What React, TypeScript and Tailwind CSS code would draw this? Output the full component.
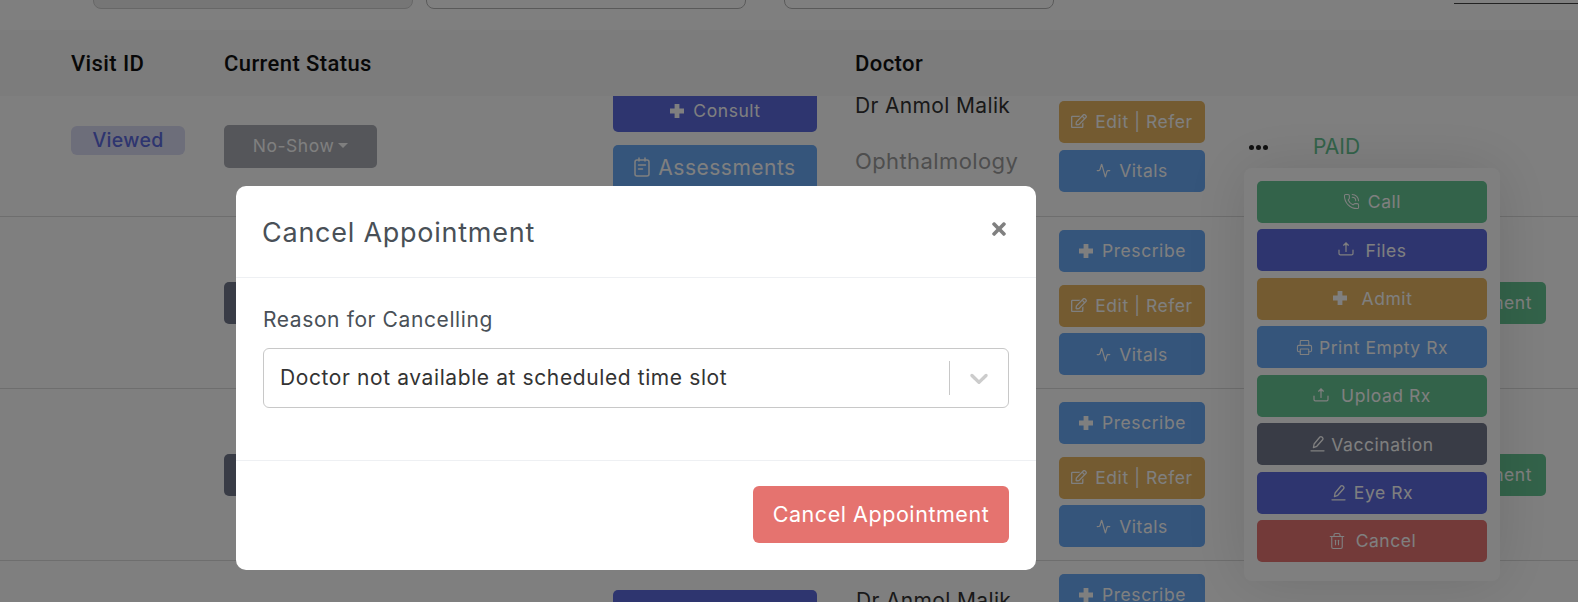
import { Activity, PhoneCall, Printer, Trash2 } from "lucide-react";
import type { ReactNode } from "react";
import { FaRegEdit, FaTimes } from "react-icons/fa";

const font = { fontFamily: "Inter, 'Noto Sans', sans-serif" };

function PlusIcon() {
  return (
    <svg className="mt-[-2px]" width="16" height="16" viewBox="0 0 16 16" fill="currentColor">
      <path d="M5.6 1h4.8v4.6H15v4.8h-4.6V15H5.6v-4.6H1V5.6h4.6z" />
    </svg>
  );
}

function PenIcon() {
  return (
    <svg className="mt-[-2px]" width="15" height="17" viewBox="0 0 15 17" fill="none" stroke="currentColor" strokeWidth="1.3" strokeLinecap="round" strokeLinejoin="round">
      <path d="M1 15.8h13" />
      <path d="M3.4 12.6l.7-3.6 5.8-7a1.4 1.4 0 0 1 2 0l.7.7a1.4 1.4 0 0 1 0 2l-5.8 6.6z" />
    </svg>
  );
}

function UploadIcon() {
  return (
    <svg className="mt-[-3px]" width="16" height="16" viewBox="0 0 16 16" fill="none" stroke="currentColor" strokeWidth="1.2" strokeLinecap="round" strokeLinejoin="round">
      <path d="M1 9v3.5c0 .8.6 1.3 1.3 1.3h11.4c.7 0 1.3-.5 1.3-1.3V9" />
      <path d="M8 10.5V2" />
      <path d="M5.6 4.2 8 1.8l2.4 2.4" fill="currentColor" />
    </svg>
  );
}

function CalIcon() {
  return (
    <svg className="mt-[-3px]" width="16" height="20" viewBox="0 0 16 20" fill="none" stroke="currentColor" strokeWidth="1.5" strokeLinecap="round">
      <rect x="1" y="3" width="14" height="16" rx="2" />
      <path d="M5 1v3M11 1v3M4.5 8h7M4.5 12h4" />
    </svg>
  );
}

function Btn({ tone, icon, label, gap = "gap-2", cls = "" }: { tone: string; icon?: ReactNode; label: string; gap?: string; cls?: string }) {
  return (
    <div className={`flex h-[42px] shrink-0 items-center justify-center rounded-[5px] pt-[1px] text-[17.5px] tracking-[0.55px] text-white ${gap} ${tone} ${cls}`}>
      {icon}
      <span>{label}</span>
    </div>
  );
}

const blue = "bg-[#6aaaf6]";
const indigo = "bg-[#5c6adf]";
const gold = "bg-[#e8b662]";
const green = "bg-[#66c694]";
const dark = "bg-[#72788c]";
const red = "bg-[#e67472]";

const editIcon = <FaRegEdit className="mt-[-3px]" size={16} />;
const vitalsIcon = <Activity className="mt-[-2px]" size={15} strokeWidth={2} />;

function Actions() {
  return (
    <div className="flex w-[146px] shrink-0 flex-col">
      <Btn tone={blue} icon={<PlusIcon />} label="Prescribe" cls="mb-[13px]" />
      <Btn tone={gold} icon={editIcon} label="Edit | Refer" />
      <Btn tone={blue} icon={vitalsIcon} label="Vitals" cls="mt-[6px] pt-[2px]" />
    </div>
  );
}

function MiddleRow() {
  return (
    <div className="flex h-[172px] items-start overflow-hidden border-b border-[#dcdcdc] pl-[224px] pt-[13px]">
      <div className="mt-[52px] h-[42px] w-[153px] shrink-0 rounded-[5px] bg-[#72788c]" />
      <div className="w-[682px] shrink-0" />
      <Actions />
      <div className="ml-[145px] mt-[52px] flex h-[42px] w-[196px] shrink-0 items-center justify-end rounded-[5px] bg-[#66c694] pr-[14px] text-[17.5px] tracking-[0.55px] text-white">
        Appointment
      </div>
    </div>
  );
}

const menu = [
  { tone: green, icon: <PhoneCall className="mt-[-3px]" size={17} strokeWidth={1.5} />, label: "Call", gap: "gap-2" },
  { tone: indigo, icon: <UploadIcon />, label: "Files", gap: "gap-3" },
  { tone: gold, icon: <PlusIcon />, label: "Admit", gap: "gap-[14px]" },
  { tone: blue, icon: <Printer size={17} strokeWidth={1.5} />, label: "Print Empty Rx", gap: "gap-[6px]" },
  { tone: green, icon: <UploadIcon />, label: "Upload Rx", gap: "gap-3" },
  { tone: dark, icon: <PenIcon />, label: "Vaccination", gap: "gap-[6px]" },
  { tone: indigo, icon: <PenIcon />, label: "Eye Rx", gap: "gap-2" },
  { tone: red, icon: <Trash2 className="mt-[-2px]" size={18} strokeWidth={1.5} />, label: "Cancel", gap: "gap-[10px]" },
];

export default function App() {
  return (
    <div className="relative h-[602px] w-[1578px] overflow-hidden bg-white text-[#333333]" style={font}>
      <div className="flex h-[9px] items-end pl-[93px]">
        <div className="h-[20px] w-[320px] shrink-0 rounded-b-[8px] border border-[#cfcfcf] bg-[#ececec]" />
        <div className="ml-[13px] h-[20px] w-[320px] shrink-0 rounded-b-[8px] border border-[#b5b5b5] bg-white" />
        <div className="ml-[38px] h-[20px] w-[270px] shrink-0 rounded-b-[8px] border border-[#b5b5b5] bg-white" />
        <div className="mb-[5px] ml-[400px] h-[1px] flex-1 bg-[#444444]" />
      </div>

      <div className="relative z-10 mt-[21px] flex h-[66px] items-center bg-[#f8f8f8] pl-[71px] text-[22px] font-medium tracking-[0.4px] text-[#111111]" style={{ fontFamily: "Roboto, sans-serif" }}>
        <div className="w-[153px]">Visit ID</div>
        <div className="w-[631px]">Current Status</div>
        <div>Doctor</div>
      </div>

      <div className="flex h-[121px] items-start border-b border-[#dcdcdc] pl-[71px]">
        <div className="w-[153px] shrink-0 pt-[30px]">
          <div className="flex h-[29px] w-[114px] items-center justify-center rounded-[6px] bg-[#dadcf5] text-[19.5px] font-medium tracking-[0.3px] text-[#5c6adf]">Viewed</div>
        </div>
        <div className="w-[389px] shrink-0 pt-[29px]">
          <div className="flex h-[43px] w-[153px] items-center justify-center gap-1 rounded-[5px] bg-[#aaacb4] text-[17.5px] tracking-[0.55px] text-white">
            No-Show
            <span className="mt-[-2px] h-0 w-0 border-x-[5px] border-t-[5px] border-x-transparent border-t-white" />
          </div>
        </div>
        <div className="mt-[-6px] w-[204px] shrink-0">
          <Btn tone={indigo} icon={<PlusIcon />} label="Consult" cls="mb-[13px]" />
          <div className="flex h-[46px] items-center justify-center gap-2 rounded-[5px] bg-[#6aaaf6] text-[21px] tracking-[0.5px] text-white">
            <CalIcon />
            Assessments
          </div>
        </div>
        <div className="w-[242px] shrink-0 pl-[38px] text-[21px] tracking-[0.35px]">
          <div className="leading-[20px]">Dr Anmol Malik</div>
          <div className="mt-[29px] whitespace-nowrap text-[22px] tracking-[0.4px] text-[#9c9c9c]">Ophthalmology</div>
        </div>
        <div className="flex w-[190px] shrink-0 flex-col pt-[5px]">
          <div className="w-[146px]">
            <Btn tone={gold} icon={editIcon} label="Edit | Refer" />
            <Btn tone={blue} icon={vitalsIcon} label="Vitals" cls="mt-[7px]" />
          </div>
        </div>
        <div className="flex h-[102px] items-center">
          <div className="flex w-[64px] gap-[2px]">
            <span className="h-[5px] w-[5px] rounded-full bg-[#222222]" />
            <span className="h-[5px] w-[5px] rounded-full bg-[#222222]" />
            <span className="h-[5px] w-[5px] rounded-full bg-[#222222]" />
          </div>
          <span className="text-[21px] text-[#66c694]">PAID</span>
        </div>
      </div>

      <MiddleRow />
      <MiddleRow />

      <div className="flex h-[160px] items-start pl-[613px] pt-[13px]">
        <div className="mt-[16px] h-[42px] w-[204px] shrink-0 rounded-[5px] bg-[#5c6adf]" />
        <div className="mt-[17px] w-[242px] shrink-0 pl-[39px] text-[21px] leading-[20px] tracking-[0.35px]">Dr Anmol Malik</div>
        <Actions />
      </div>

      <div className="absolute left-[1244px] top-[168px] flex h-[413px] w-[256px] flex-col gap-[6.45px] rounded-[8px] bg-white px-[13px] pt-[13px] shadow-[0_0_60px_rgba(0,0,0,0.12)]">
        {menu.map((m) => (
          <Btn key={m.label} tone={m.tone} icon={m.icon} label={m.label} gap={m.gap} />
        ))}
      </div>

      <div className="absolute inset-0 z-20 bg-black/50" />

      <div className="absolute left-[236px] top-[186px] z-30 flex h-[384px] w-[800px] flex-col rounded-[10px] bg-white text-[#495057]">
        <div className="flex h-[92px] shrink-0 items-center justify-between border-b border-[#eef0f3] pl-[26px] pr-[27px]">
          <div className="pt-[3px] text-[27px] font-normal tracking-[0.75px]">Cancel Appointment</div>
          <FaTimes className="mb-[6px] text-[#808080]" size={20} />
        </div>
        <div className="h-[183px] shrink-0 border-b border-[#eef0f3] px-[27px] pt-[28px]">
          <div className="text-[21px] font-normal leading-[28px] tracking-[0.6px]">Reason for Cancelling</div>
          <div className="mt-[14px] flex h-[60px] items-center rounded-[6px] border border-[#c8c8c8] pl-[16px] text-[21px] tracking-[0.6px] text-[#333333]">
            <span className="flex-1">Doctor not available at scheduled time slot</span>
            <span className="h-[34px] w-px bg-[#c8c8c8]" />
            <svg className="mx-[14px] text-[#cccccc]" width="30" height="30" viewBox="0 0 20 20" fill="currentColor">
              <path d="M4.516 7.548c0.436-0.446 1.043-0.481 1.576 0l3.908 3.747 3.908-3.747c0.533-0.481 1.141-0.446 1.574 0 0.436 0.445 0.408 1.197 0 1.615-0.406 0.418-4.695 4.502-4.695 4.502-0.217 0.223-0.502 0.335-0.787 0.335s-0.57-0.112-0.789-0.335c0 0-4.287-4.084-4.695-4.502s-0.436-1.17 0-1.615z" />
            </svg>
          </div>
        </div>
        <div className="flex justify-end px-[27px] pt-[25px]">
          <div className="flex h-[57px] w-[256px] items-center justify-center rounded-[6px] bg-[#e5736f] text-[21.5px] tracking-[0.55px] text-white">Cancel Appointment</div>
        </div>
      </div>
    </div>
  );
}
